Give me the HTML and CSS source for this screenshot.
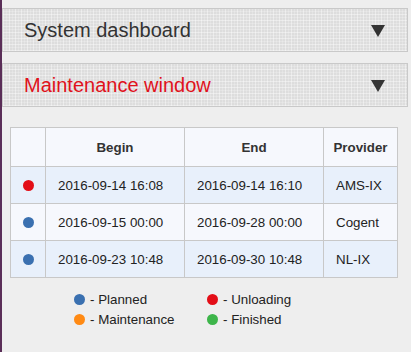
FILE: index.html
```html
<!DOCTYPE html>
<html>
<head>
<meta charset="utf-8">
<link rel="stylesheet" href="styles.css">
</head>
<body>
<div class="page">
  <div class="panel-header">
    <span class="panel-title">System dashboard</span>
    <svg class="caret" width="14" height="12" viewBox="0 0 14 12"><polygon points="0,0 14,0 7,12" fill="#333"/></svg>
  </div>
  <div class="panel-header">
    <span class="panel-title red">Maintenance window</span>
    <svg class="caret" width="14" height="12" viewBox="0 0 14 12"><polygon points="0,0 14,0 7,12" fill="#333"/></svg>
  </div>
  <table class="maint">
    <thead>
      <tr><th class="c-dot"></th><th class="c-date">Begin</th><th class="c-date">End</th><th class="c-prov">Provider</th></tr>
    </thead>
    <tbody>
      <tr class="alt"><td class="c-dot"><span class="dot red-dot"></span></td><td>2016-09-14 16:08</td><td>2016-09-14 16:10</td><td>AMS-IX</td></tr>
      <tr><td class="c-dot"><span class="dot blue-dot"></span></td><td>2016-09-15 00:00</td><td>2016-09-28 00:00</td><td>Cogent</td></tr>
      <tr class="alt"><td class="c-dot"><span class="dot blue-dot"></span></td><td>2016-09-23 10:48</td><td>2016-09-30 10:48</td><td>NL-IX</td></tr>
    </tbody>
  </table>
  <div class="legend">
    <div class="legend-item"><span class="dot blue-dot"></span>- Planned</div>
    <div class="legend-item"><span class="dot red-dot"></span>- Unloading</div>
    <div class="legend-item"><span class="dot orange-dot"></span>- Maintenance</div>
    <div class="legend-item"><span class="dot green-dot"></span>- Finished</div>
  </div>
</div>
</body>
</html>
```
FILE: styles.css
```css
html, body {
  margin: 0;
  padding: 0;
  background: #eeeeee;
  font-family: "Liberation Sans", Arial, sans-serif;
}
.page {
  border-left: 2px solid #5a2e58;
  min-height: 352px;
  box-sizing: border-box;
  padding: 8px 3px 0 0;
}
.panel-header {
  height: 44px;
  box-sizing: border-box;
  border: 1px solid #c9c9c9;
  display: flex;
  align-items: center;
  justify-content: space-between;
  padding: 0 22px 0 21px;
  margin-bottom: 11px;
  background-color: #dddddd;
  background-image:
    repeating-linear-gradient(90deg, rgba(255,255,255,0.4) 0 1px, transparent 1px 3px, rgba(255,255,255,0.2) 3px 4px, transparent 4px 6px),
    repeating-linear-gradient(0deg, rgba(255,255,255,0.4) 0 1px, transparent 1px 3px, rgba(255,255,255,0.2) 3px 4px, transparent 4px 6px);
}
.panel-title {
  font-size: 20px;
  color: #333;
}
.panel-title.red {
  color: #e0121b;
}
.caret {
  display: block;
  margin-top: 1px;
}
.maint {
  margin: 20px 0 0 8px;
  width: 388px;
  border-collapse: collapse;
  font-size: 10pt;
  color: #222;
}
.maint th, .maint td {
  border: 1px solid #c8c8c8;
  padding: 0 0 0 12px;
  text-align: left;
}
.maint th {
  height: 38px;
  font-weight: bold;
  color: #333;
  text-align: center;
  padding: 0;
  background: #f6f8fd;
}
.maint td {
  height: 36px;
  background: #f6f8fd;
}
.maint tr.alt td {
  background: #e8f0fb;
}
.maint .c-dot {
  width: 34px;
  padding: 0;
  text-align: center;
}
.maint .c-date {
  width: 138px;
}
.maint td.c-dot .dot {
  vertical-align: middle;
  margin: 0;
}
.dot {
  display: inline-block;
  width: 11px;
  height: 11px;
  border-radius: 50%;
}
.red-dot { background: #e30e17; }
.blue-dot { background: #3a70b0; }
.orange-dot { background: #ff8a14; }
.green-dot { background: #3db54a; }
.legend {
  display: grid;
  grid-template-columns: 133px auto;
  row-gap: 4px;
  margin: 13px 0 0 72px;
  font-size: 10pt;
  color: #222;
}
.legend-item {
  display: flex;
  align-items: center;
  height: 16px;
}
.legend-item .dot {
  margin-right: 5px;
}
```
